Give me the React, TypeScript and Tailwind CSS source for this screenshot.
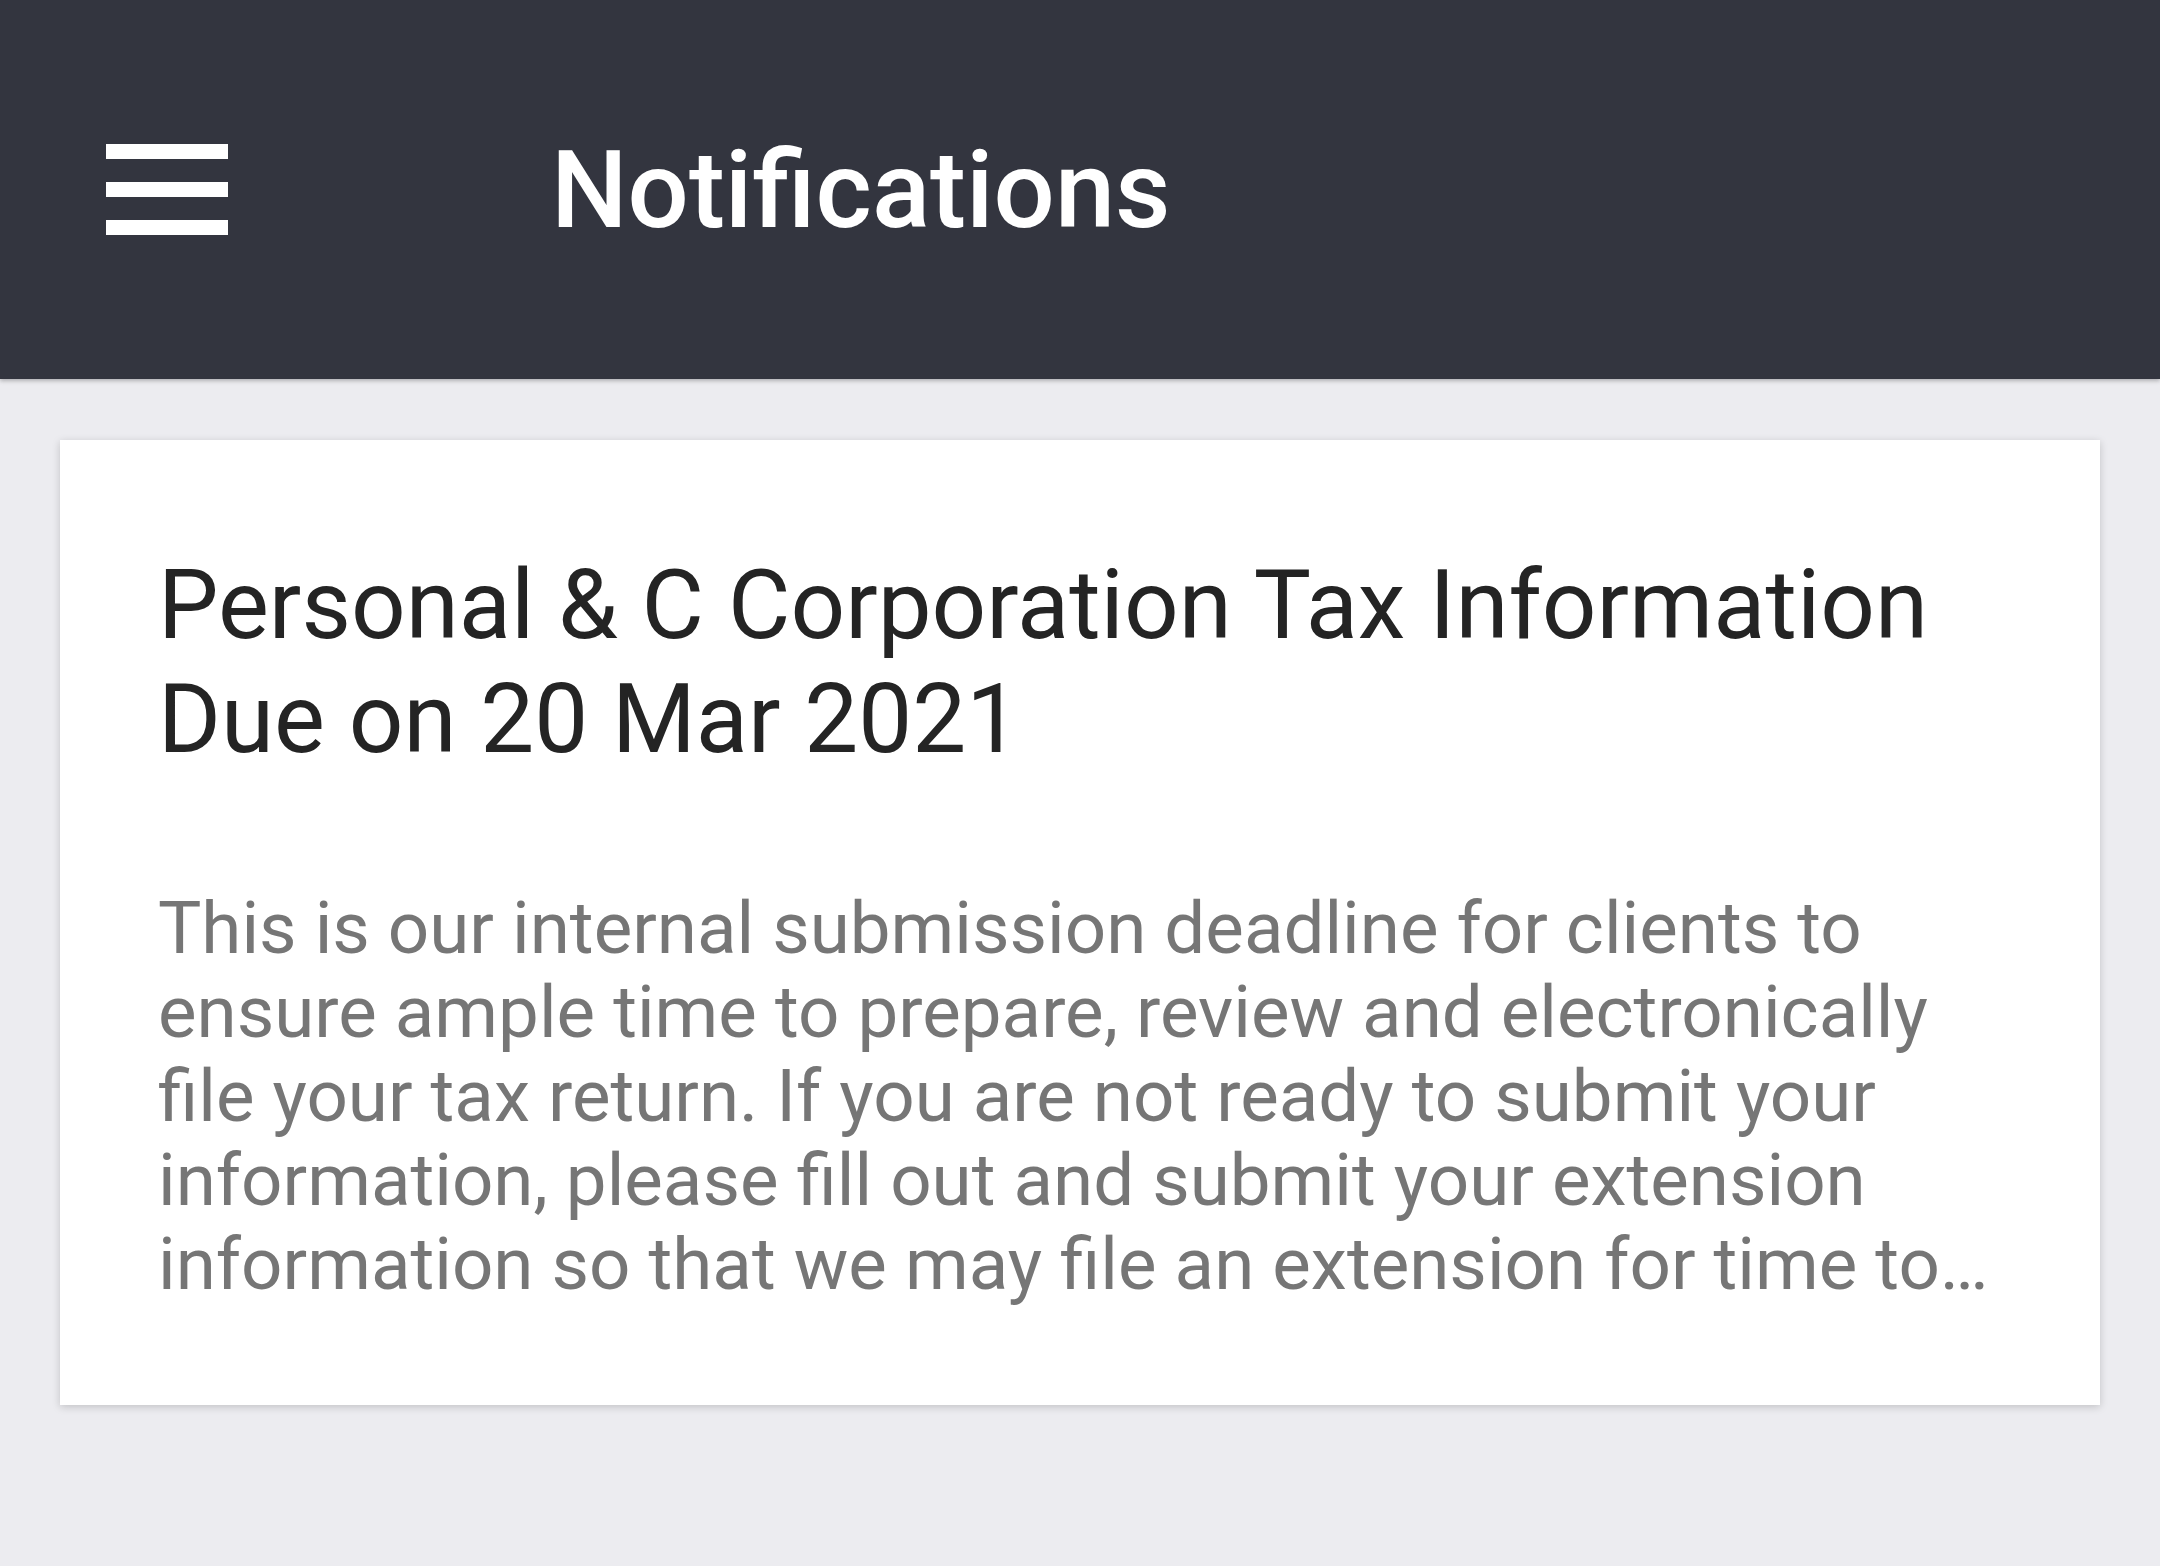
import React from "react";

export default function App() {
  const body =
    "This is our internal submission deadline for clients to ensure ample time to prepare, review and electronically file your tax return. If you are not ready to submit your information, please fill out and submit your extension information so that we may file an extension for time to\u2026";
  return (
    <div
      className="min-h-screen w-full bg-[#ececf0]"
      style={{ fontFamily: "Roboto, 'Noto Sans', sans-serif" }}
    >
      <header className="h-[379px] w-full bg-[#33353f] flex items-center shadow-[0_2px_4px_rgba(0,0,0,0.25)]">
        <div className="ml-[106px] w-[122px] flex flex-col gap-[23px]">
          <div className="h-[15px] w-full bg-white" />
          <div className="h-[15px] w-full bg-white" />
          <div className="h-[15px] w-full bg-white" />
        </div>
        <h1 className="ml-[323px] text-[108px] leading-none font-medium text-white">
          Notifications
        </h1>
      </header>
      <main className="pt-[61px] px-[60px]">
        <div className="w-[2040px] bg-white shadow-[0_2px_8px_rgba(0,0,0,0.18)] pl-[98px] pr-[98px] pt-[108px] pb-[98px]">
          <h2 className="text-[96px] leading-[114px] font-normal text-[#242424]">
            Personal &amp; C Corporation Tax Information Due on 20 Mar 2021
          </h2>
          <p className="mt-[111px] text-[72.7px] leading-[84px] text-[#767676]">
            {body}
          </p>
        </div>
      </main>
    </div>
  );
}
